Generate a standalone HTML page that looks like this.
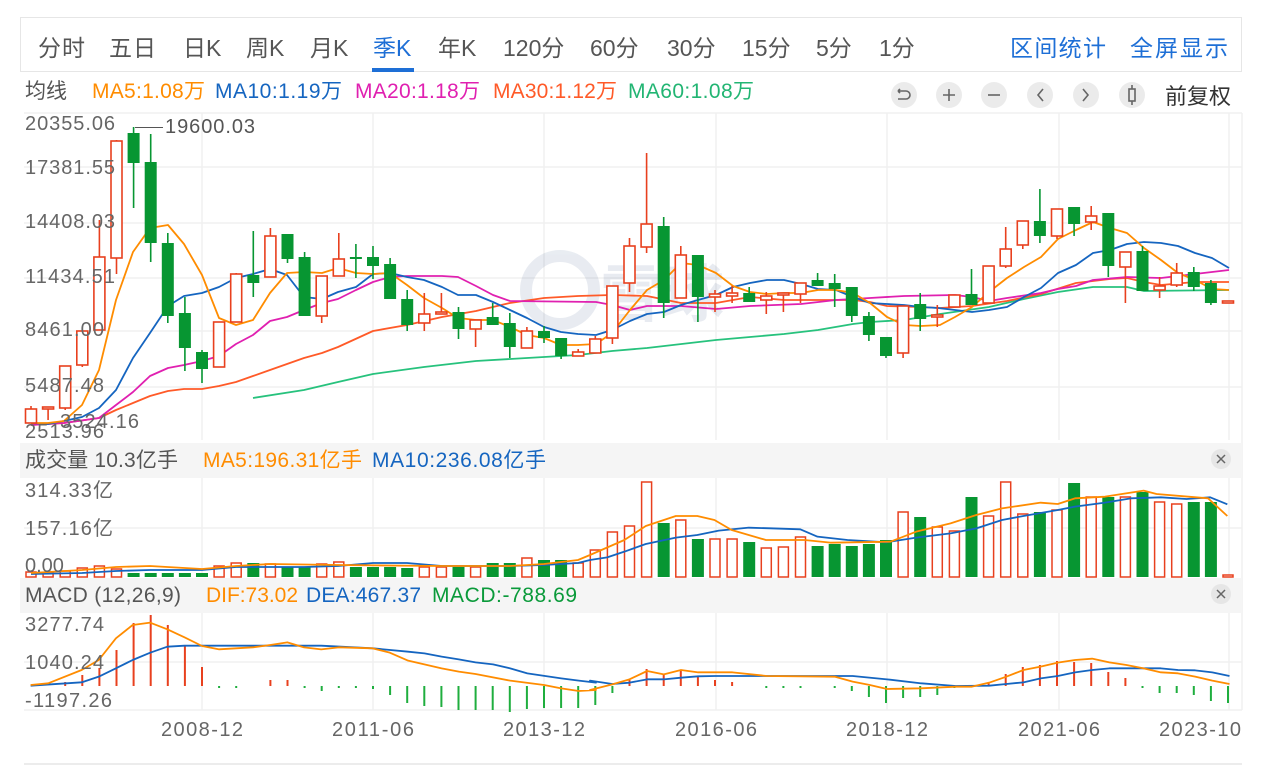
<!DOCTYPE html>
<html><head><meta charset="utf-8"><style>
html,body{margin:0;padding:0;background:#fff;width:1264px;height:768px;overflow:hidden;font-family:"Liberation Sans","Noto Sans CJK SC",sans-serif;}
svg text{font-family:"Liberation Sans","Noto Sans CJK SC",sans-serif;}
</style></head><body>
<svg id="s" width="1264" height="768" xmlns="http://www.w3.org/2000/svg">
<rect x="20.5" y="17.5" width="1221" height="54" fill="#fff" stroke="#e6e6e6"/>
<g font-size="23" fill="#555">
<text x="38" y="56" textLength="47">分时</text><text x="109" y="56" textLength="47">五日</text><text x="183" y="56">日K</text><text x="246" y="56">周K</text><text x="310" y="56">月K</text>
<text x="373" y="56" fill="#1e6fd6">季K</text><text x="438" y="56">年K</text><text x="503" y="56">120分</text><text x="590" y="56">60分</text><text x="667" y="56">30分</text><text x="742" y="56">15分</text><text x="816" y="56">5分</text><text x="879" y="56">1分</text>
<text x="1010" y="56" fill="#1e6fd6" textLength="96">区间统计</text><text x="1130" y="56" fill="#1e6fd6" textLength="98">全屏显示</text>
</g>
<rect x="372" y="68" width="42" height="4" fill="#1e6fd6"/>
<g font-size="21">
<text x="25" y="98" fill="#555">均线</text>
<text x="92" y="98" fill="#ff8c00" textLength="113">MA5:1.08万</text>
<text x="215" y="98" fill="#1565c0" textLength="127">MA10:1.19万</text>
<text x="355" y="98" fill="#e020b0" textLength="125">MA20:1.18万</text>
<text x="493" y="98" fill="#ff5a28" textLength="124">MA30:1.12万</text>
<text x="628" y="98" fill="#22b573" textLength="126">MA60:1.08万</text>
</g>
<g fill="#ebebeb"><circle cx="904" cy="95" r="13"/><circle cx="949" cy="95" r="13"/><circle cx="994" cy="95" r="13"/><circle cx="1040" cy="95" r="13"/><circle cx="1086" cy="95" r="13"/><circle cx="1132" cy="95" r="13"/></g>
<g stroke="#666" stroke-width="1.6" fill="none">
<path d="M898 91h8a4 4 0 0 1 0 8h-8M898 91l2 -2M898 91l2 2"/>
<path d="M943 95h12M949 89v12"/>
<path d="M988 95h12"/>
<path d="M1043 89l-5 6l5 6"/>
<path d="M1083 89l5 6l-5 6"/>
<rect x="1129" y="89" width="6" height="12"/><path d="M1132 85v4M1132 101v4"/>
</g>
<text x="1165" y="104" font-size="22" fill="#333">前复权</text>
<g id="grid" stroke="#f0f0f0" stroke-width="1.5" fill="none"></g>
<g opacity="0.1">
<circle cx="560" cy="290" r="34" fill="none" stroke="#2a4a80" stroke-width="12"/>
<text x="600" y="316" font-size="62" fill="#2a4a80" font-weight="bold">雪球</text>
</g>
<rect x="20" y="443" width="1222" height="35" fill="#f5f5f5"/>
<rect x="20" y="578" width="1222" height="35" fill="#f5f5f5"/>
<g id="plot"></g>
<g font-size="20" fill="#666" id="ylab">
<text x="25" y="130" textLength="90">20355.06</text><text x="25" y="174" textLength="90">17381.55</text><text x="25" y="228" textLength="90">14408.03</text><text x="25" y="283" textLength="90">11434.51</text><text x="25" y="336" textLength="79">8461.00</text><text x="25" y="392" textLength="79">5487.48</text><text x="25" y="438" textLength="79">2513.96</text><text x="60" y="428" textLength="79">3524.16</text>
<text x="165" y="133" fill="#555" textLength="90">19600.03</text>
</g>
<path d="M135 127.5h28" stroke="#555" stroke-width="1"/>
<g font-size="21">
<text x="25" y="467" fill="#555" textLength="153">成交量 10.3亿手</text>
<text x="203" y="467" fill="#ff8c00" textLength="159">MA5:196.31亿手</text>
<text x="372" y="467" fill="#1565c0" textLength="174">MA10:236.08亿手</text>
<text x="25" y="602" fill="#555" textLength="156">MACD (12,26,9)</text>
<text x="206" y="602" fill="#ff8c00" textLength="92">DIF:73.02</text>
<text x="306" y="602" fill="#1565c0" textLength="115">DEA:467.37</text>
<text x="432" y="602" fill="#0a9a3a" textLength="145">MACD:-788.69</text>
</g>
<g font-size="20" fill="#666">
<text x="25" y="497" textLength="88">314.33亿</text><text x="25" y="535" textLength="88">157.16亿</text><text x="25" y="572">0.00</text>
<text x="25" y="631" textLength="79">3277.74</text><text x="25" y="669" textLength="79">1040.24</text><text x="25" y="707" textLength="87">-1197.26</text>
<text x="202" y="736" text-anchor="middle" textLength="82">2008-12</text><text x="373" y="736" text-anchor="middle" textLength="82">2011-06</text><text x="544" y="736" text-anchor="middle" textLength="82">2013-12</text><text x="716" y="736" text-anchor="middle" textLength="82">2016-06</text><text x="887" y="736" text-anchor="middle" textLength="82">2018-12</text><text x="1059" y="736" text-anchor="middle" textLength="82">2021-06</text><text x="1200" y="736" text-anchor="middle" textLength="82">2023-10</text>
</g>
<g fill="#e6e6e6"><circle cx="1221" cy="459" r="10"/><circle cx="1221" cy="594" r="10"/></g>
<g stroke="#666" stroke-width="1.5"><path d="M1217 455l8 8M1225 455l-8 8M1217 590l8 8M1225 590l-8 8"/></g>
<rect x="24" y="763" width="1218" height="2" fill="#ececec"/>
</svg>
<script>
var NS="http://www.w3.org/2000/svg",P=document.getElementById('plot'),G=document.getElementById('grid');
function el(t,a,p){var e=document.createElementNS(NS,t);for(var k in a)e.setAttribute(k,a[k]);(p||P).appendChild(e);return e;}
[202,373,544,716,887,1059,1229].forEach(function(x){el('path',{d:'M'+x+' 113V440M'+x+' 478V577M'+x+' 613V710'},G);});
[113,167,223,278,331,387].forEach(function(y){el('path',{d:'M24 '+y+'H1242'},G);});
[528,662,710].forEach(function(y){el('path',{d:'M24 '+y+'H1242'},G);});
el('path',{d:'M1242 113V710'},G);
var R="#e8401e",GR="#079632";
function X(i){return 31+17.1*i;}
var C=[
['u',409,423,406,423],['u',407,408,407,420],['u',366,408,366,410],['u',331,365,331,367],['u',257,330,220,330],['u',141,258,140,274],
['d',133,163,127,208],['d',162,243,134,262],['d',243,316,233,323],['d',313,348,297,371],['d',352,369,350,383],['u',322,367,322,367],
['u',274,322,273,322],['d',275,283,231,297],['u',236,277,228,277],['d',234,259,234,263],['d',257,316,252,316],['u',276,316,276,323],
['u',259,276,233,276],['d',257,259,244,278],['d',257,266,246,279],['d',264,299,258,299],['d',299,325,290,331],['u',314,323,293,331],
['u',312,314,293,314],['d',312,329,307,339],['u',320,329,320,347],['d',317,325,303,325],['d',323,347,313,358],['u',331,348,327,348],
['d',331,338,326,343],['d',338,356,338,359],['u',352,356,349,356],['u',339,353,336,353],['u',286,338,286,344],['u',246,283,238,292],
['u',224,247,153,253],['d',226,303,217,318],['u',255,298,246,298],['d',255,297,255,322],['u',294,297,290,312],['u',293,296,286,303],
['d',293,302,287,302],['u',296,300,292,314],['u',293,295,293,312],['u',283,294,283,303],['d',280,286,273,286],['d',283,289,274,307],
['d',287,316,287,322],['d',316,335,312,341],['d',337,356,337,358],['u',306,353,306,358],['d',304,319,293,331],['u',315,317,305,327],
['u',295,307,295,307],['d',294,305,269,305],['u',266,303,266,303],['u',249,266,227,268],['u',221,245,221,249],['d',221,236,189,243],
['u',209,236,209,239],['d',207,224,207,236],['u',216,222,206,230],['d',213,266,213,277],['u',252,267,252,303],['d',251,291,246,291],
['u',286,290,277,298],['u',273,285,263,287],['d',272,287,267,291],['d',283,303,280,305],['u',301,303,301,303]];
function line(pts,c,w){el('polyline',{points:pts.map(function(p){return p[0]+','+p[1]}).join(' '),fill:'none',stroke:c,'stroke-width':w||1.8,'stroke-linejoin':'round'});}
line([[253,398],[304,390],[338,382],[373,374],[424,367],[476,361],[527,358],[578,355],[612,351],[647,348],[716,340],[750,337],[784,334],[818,330],[853,324],[870,322],[904,320],[940,314],[989,307],[1024,299],[1058,292],[1093,287],[1127,287],[1144,291],[1229,290]],'#27c27d');
line([[31,425],[64,423],[99,418],[116,410],[133,403],[150,396],[168,391],[184,389],[202,389],[219,386],[236,382],[253,376],[270,370],[287,364],[304,358],[322,353],[338,347],[373,331],[407,325],[442,317],[476,311],[510,303],[544,298],[578,296],[612,295],[647,296],[681,303],[716,303],[750,297],[784,300],[818,300],[853,300],[870,302],[887,306],[921,307],[940,308],[972,306],[1007,301],[1041,294],[1076,283],[1110,279],[1127,278],[1144,282],[1161,285],[1195,282],[1229,282]],'#ff5a28');
line([[31,425],[64,423],[99,418],[116,405],[133,392],[150,376],[168,368],[184,365],[202,361],[219,356],[236,344],[253,335],[270,321],[287,317],[304,310],[322,303],[338,299],[356,290],[373,282],[390,277],[407,276],[442,276],[458,277],[476,286],[493,295],[510,301],[596,302],[612,305],[630,310],[647,306],[681,306],[716,309],[750,306],[801,304],[836,300],[870,298],[904,296],[955,295],[972,297],[989,301],[1007,298],[1041,293],[1058,289],[1076,286],[1093,280],[1127,277],[1161,278],[1195,274],[1229,270]],'#e020b0');
line([[31,423],[48,424],[64,421],[82,417],[99,408],[116,390],[133,358],[150,333],[168,306],[184,296],[202,293],[219,287],[236,278],[253,274],[270,269],[287,275],[304,297],[322,299],[338,292],[356,287],[373,274],[390,273],[407,277],[424,280],[442,287],[458,295],[476,295],[493,302],[510,310],[527,318],[544,327],[561,332],[578,334],[596,335],[612,330],[630,321],[647,314],[664,312],[681,305],[698,300],[716,295],[733,287],[750,283],[767,280],[784,280],[801,284],[818,289],[836,290],[853,297],[870,303],[887,304],[904,305],[921,307],[938,308],[955,310],[972,312],[989,310],[1007,307],[1024,297],[1041,288],[1058,273],[1076,265],[1093,253],[1110,250],[1127,244],[1144,242],[1161,243],[1178,246],[1195,253],[1212,258],[1229,268]],'#1565c0');
line([[31,423],[48,423],[64,421],[82,405],[99,370],[116,300],[133,252],[150,228],[168,225],[184,244],[202,275],[219,318],[236,325],[253,320],[270,293],[287,273],[304,272],[322,273],[338,268],[356,273],[373,274],[390,273],[407,285],[424,298],[442,308],[458,318],[476,320],[493,320],[510,327],[527,335],[544,338],[561,345],[578,345],[596,344],[612,333],[630,310],[647,290],[664,280],[681,263],[698,265],[716,273],[733,286],[750,292],[767,294],[784,293],[801,293],[818,290],[836,290],[853,293],[870,303],[887,317],[904,325],[921,326],[940,325],[955,317],[972,307],[989,292],[1007,278],[1024,267],[1041,257],[1058,239],[1076,230],[1093,222],[1110,228],[1127,233],[1144,248],[1161,260],[1178,273],[1195,280],[1212,289],[1229,290]],'#ff8c00');
C.forEach(function(c,i){var x=X(i),col=c[0]=='u'?R:GR,bt=c[1],bb=Math.max(c[2],c[1]+2);
 el('path',{d:'M'+x+' '+c[3]+'V'+bt+'M'+x+' '+bb+'V'+c[4],stroke:col,'stroke-width':1.6});
 if(c[0]=='u')el('rect',{x:x-5.5,y:bt,width:11,height:bb-bt,fill:'#fff',stroke:col,'stroke-width':1.6});
 else el('rect',{x:x-6,y:bt,width:12,height:bb-bt,fill:col});});
var V=[572,573,571,568,566,569,573,573,573,573,573,566,563,563,564,567,567,564,562,567,567,567,568,567,567,567,567,563,563,558,560,560,563,550,532,526,482,523,520,539,539,539,542,548,547,537,546,544,546,544,540,512,517,527,531,497,516,482,514,512,510,483,497,497,497,492,502,504,502,502,575];
V.forEach(function(t,i){var x=X(i),col=C[i][0]=='u'?R:GR;
 if(C[i][0]=='u')el('rect',{x:x-5,y:t,width:10,height:577-t,fill:'#fff',stroke:col,'stroke-width':1.5});
 else el('rect',{x:x-6,y:t,width:12,height:577-t,fill:col});});
function z8(a){return a.map(function(p){return [590+p[0]/2.33,440+p[1]/3];});}
function z3(a){return a.map(function(p){return [p[0]/2.45,430+p[1]/3];});}
line([[31,574],[82,573],[116,571],[150,570],[202,570],[236,567],[304,567],[338,566],[373,563],[407,563],[442,566],[510,566],[544,565],[578,563]].concat(z8([[0,360],[40,352],[80,335],[130,312],[200,293],[250,285],[300,272],[370,263],[420,265],[490,268],[530,290],[600,300],[690,307],[760,293],[840,280],[900,265],[960,240],[1010,228],[1090,210],[1130,200],[1200,188],[1260,175],[1330,172],[1390,177],[1445,172],[1485,193]])),'#1565c0');
line([[31,573],[82,570],[116,567],[150,566],[202,569],[236,566],[270,564],[338,565],[442,566],[510,566],[544,564],[578,560]].concat(z8([[0,345],[80,300],[130,258],[200,228],[250,228],[290,240],[330,270],[410,300],[500,300],[560,308],[700,305],[760,275],[840,250],[900,225],[960,205],[1050,188],[1090,192],[1130,175],[1200,170],[1290,152],[1320,162],[1440,175],[1485,228]])),'#ff8c00');
var M={2:682,3:675,4:668,5:650,6:623,7:615,8:625,9:646,10:667,11:688,12:688,14:680,15:680,16:688,17:691,18:688,19:688,20:689,21:695,22:703,23:706,24:707,25:710,26:710,27:710,28:712,29:709,30:708,31:708,32:708,33:705,34:693,35:680,36:669,37:674,38:670,39:677,40:680,41:682,43:688,44:688,45:688,47:688,48:691,49:697,50:703,51:698,52:697,53:695,54:688,56:682,57:674,58:667,59:665,60:661,61:662,62:663,63:672,64:678,65:688,66:693,67:693,68:695,69:701,70:703};
var Z=686;for(var k in M){var i=+k,t=M[k],x=X(i),pos=t<Z&&!(i>=16&&i<=33)&&i!=11&&i!=12;
 if(i==14||i==15)pos=true;if(i==54||i==43||i==44||i==45||i==47||i==48||i==11||i==12||i==16||i==18||i==19)t=Math.max(t,688);
 var col=pos?R:'#1fae3e';el('path',{d:'M'+x+' '+Math.min(t,Z)+'V'+Math.max(t,Z),stroke:col,'stroke-width':2});}
line(z3([[75,767],[200,757],[242,740],[284,715],[325,690],[368,668],[410,650],[452,647],[537,647],[787,647],[913,655],[1000,665],[1040,670],[1082,680],[1124,688],[1165,697],[1208,703],[1250,715],[1292,730],[1375,745],[1418,752],[1460,758]]).concat(z8([[0,722],[52,732],[92,728],[133,718],[172,718],[212,713],[252,709],[292,708],[612,708],[692,718],[772,730],[852,738],[930,737],[970,732],[1010,727],[1050,715],[1090,708],[1130,697],[1170,690],[1210,685],[1330,685],[1370,690],[1410,691],[1450,697],[1490,708]])),'#1565c0');
line(z3([[75,765],[118,760],[200,720],[242,690],[284,625],[325,585],[368,578],[410,598],[452,622],[495,648],[537,658],[620,652],[662,645],[704,637],[745,652],[787,658],[830,652],[913,655],[955,668],[1000,692],[1082,715],[1124,725],[1165,732],[1250,752],[1333,765],[1375,775],[1418,783],[1460,780]]).concat(z8([[0,750],[52,733],[92,718],[133,693],[172,703],[212,690],[252,697],[332,697],[412,708],[570,710],[612,725],[652,735],[692,747],[772,745],[852,740],[890,740],[930,728],[970,710],[1010,690],[1050,680],[1090,668],[1130,660],[1170,656],[1210,667],[1250,675],[1290,685],[1330,697],[1370,700],[1410,710],[1450,722],[1490,732]])),'#ff8c00');
</script>
</body></html>
